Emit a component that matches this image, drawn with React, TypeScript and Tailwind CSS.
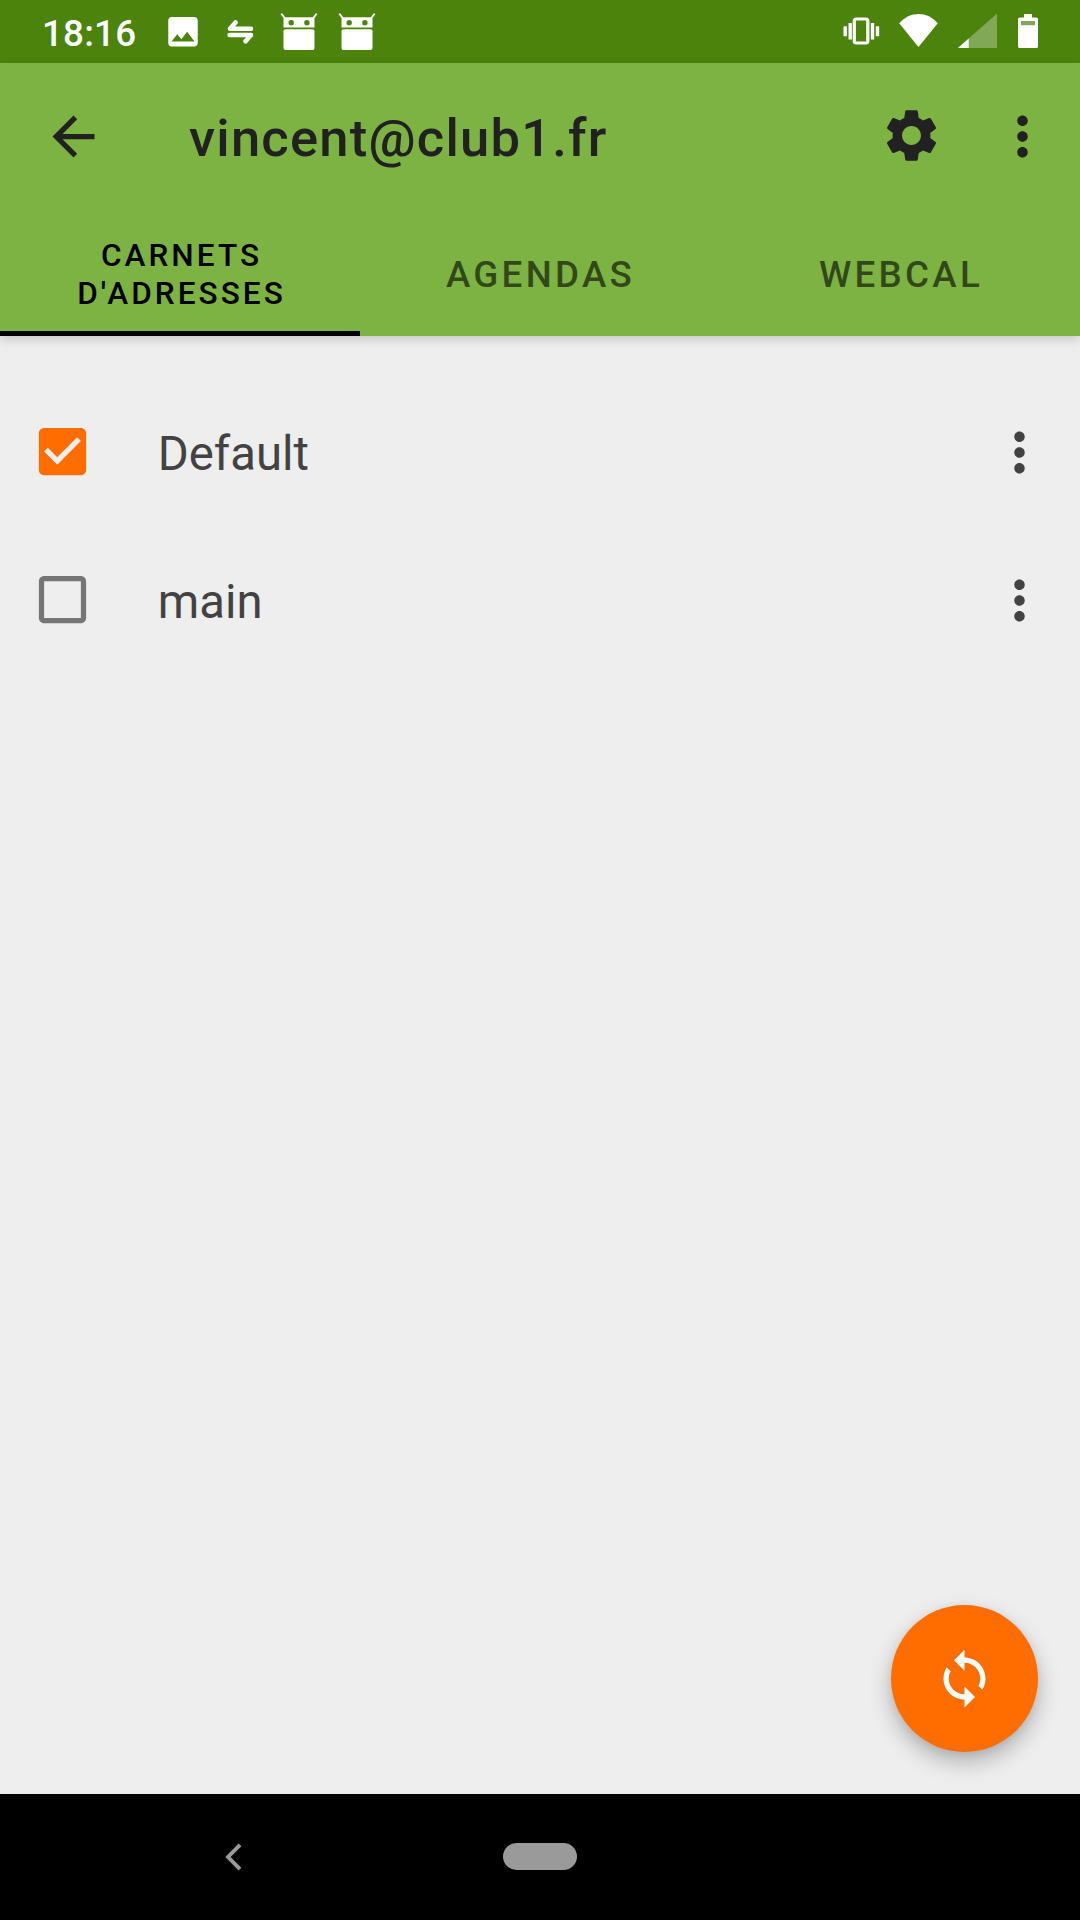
import React from "react";

const Icon = ({ d, className }: { d: string; className: string }) => (
  <svg viewBox="0 0 24 24" fill="currentColor" className={`size-[63px] shrink-0 ${className}`}>
    <path d={d} />
  </svg>
);

const BACK = "M20,11H7.83l5.59,-5.59L12,4l-8,8 8,8 1.41,-1.41L7.83,13H20v-2z";
const GEAR =
  "M19.14,12.94c0.04-0.3,0.06-0.61,0.06-0.94c0-0.32-0.02-0.64-0.07-0.94l2.03-1.58c0.18-0.14,0.23-0.41,0.12-0.61 l-1.92-3.32c-0.12-0.22-0.37-0.29-0.59-0.22l-2.39,0.96c-0.5-0.38-1.03-0.7-1.62-0.94L14.4,2.81c-0.04-0.24-0.24-0.41-0.48-0.41 h-3.84c-0.24,0-0.43,0.17-0.47,0.41L9.25,5.35C8.66,5.59,8.12,5.92,7.63,6.29L5.24,5.33c-0.22-0.08-0.47,0-0.59,0.22L2.74,8.87 C2.62,9.08,2.66,9.34,2.86,9.48l2.03,1.58C4.84,11.36,4.8,11.69,4.8,12s0.02,0.64,0.07,0.94l-2.03,1.58 c-0.18,0.14-0.23,0.41-0.12,0.61l1.92,3.32c0.12,0.22,0.37,0.29,0.59,0.22l2.39-0.96c0.5,0.38,1.03,0.7,1.62,0.94l0.36,2.54 c0.05,0.24,0.24,0.41,0.48,0.41h3.84c0.24,0,0.44-0.17,0.47-0.41l0.36-2.54c0.59-0.24,1.13-0.56,1.62-0.94l2.39,0.96 c0.22,0.08,0.47,0,0.59-0.22l1.92-3.32c0.12-0.22,0.07-0.47-0.12-0.61L19.14,12.94z M12,15.6c-1.98,0-3.6-1.62-3.6-3.6 s1.62-3.6,3.6-3.6s3.6,1.62,3.6,3.6S13.98,15.6,12,15.6z";
const MORE =
  "M12 8c1.1 0 2-.9 2-2s-.9-2-2-2-2 .9-2 2 .9 2 2 2zm0 2c-1.1 0-2 .9-2 2s.9 2 2 2 2-.9 2-2-.9-2-2-2zm0 6c-1.1 0-2 .9-2 2s.9 2 2 2 2-.9 2-2-.9-2-2-2z";
const CHECKED =
  "M19,3H5C3.9,3 3,3.9 3,5v14c0,1.1 0.9,2 2,2h14c1.1,0 2,-0.9 2,-2V5C21,3.9 20.1,3 19,3zM10,17l-5,-5 1.41,-1.41L10,14.17l7.59,-7.59L19,8l-9,9z";
const UNCHECKED =
  "M19 5v14H5V5h14m0-2H5c-1.1 0-2 .9-2 2v14c0 1.1.9 2 2 2h14c1.1 0 2-.9 2-2V5c0-1.1-.9-2-2-2z";
const SYNC =
  "M12 4V1L8 5l4 4V6c3.31 0 6 2.69 6 6 0 1.01-.25 1.97-.7 2.8l1.46 1.46C19.54 15.03 20 13.57 20 12c0-4.42-3.58-8-8-8zm0 14c-3.31 0-6-2.69-6-6 0-1.01.25-1.97.7-2.8L5.24 7.74C4.46 8.97 4 10.43 4 12c0 4.42 3.58 8 8 8v3l4-4-4-4v3z";
const IMAGE =
  "M21 19V5c0-1.1-.9-2-2-2H5c-1.1 0-2 .9-2 2v14c0 1.1.9 2 2 2h14c1.1 0 2-.9 2-2zM8.5 13.5l2.5 3.01L14.5 12l4.5 6H5l3.5-4.5z";

const Droid = ({ className }: { className: string }) => (
  <svg viewBox="0 0 38 38" fill="white" className={`h-[38px] w-[38px] shrink-0 ${className}`}>
    <path d="M1.800 1.200 5 5.500M36.200 1.200 33 5.500" stroke="white" strokeWidth="1.900" strokeLinecap="round" />
    <path
      fillRule="evenodd"
      d="M5.500 4.300h27a2 2 0 0 1 2 2v8.200h-31V6.300a2 2 0 0 1 2-2zM11.200 7.100a2.700 2.700 0 1 0 0 5.400 2.700 2.700 0 0 0 0-5.400zM26.900 7.100a2.700 2.700 0 1 0 0 5.400 2.700 2.700 0 0 0 0-5.400z"
    />
    <rect x="3.500" y="16.200" width="31" height="20.700" rx="2" />
  </svg>
);

function StatusBar() {
  return (
    <div className="flex h-[63px] shrink-0 items-start bg-[#4b830d] text-white">
      <span className="ml-[42px] mt-[12px] w-[96px] whitespace-nowrap text-[36.75px] font-medium leading-[43px] tracking-[0.2px]">
        18:16
      </span>
      <svg viewBox="3 3 18 18" fill="white" className="ml-[30px] mt-[17px] h-[29.5px] w-[30px]">
        <path d={IMAGE} />
      </svg>
      <svg viewBox="0 0 28 24" className="ml-[29px] mt-[20px] h-[24px] w-[28px]" fill="none" stroke="white" strokeWidth="4.600" strokeLinejoin="round" strokeLinecap="round">
        <path d="M24 8.800H3L8.500 2.500" />
        <path d="M2.600 15H24L18.500 21.300" />
      </svg>
      <Droid className="ml-[25px] mt-[13px]" />
      <Droid className="ml-[20px] mt-[13px]" />
      <svg viewBox="0 0 38 28" className="ml-[467px] mt-[17px] h-[28px] w-[38px]">
        <rect x="11.300" y="2" width="13.500" height="24" rx="2" fill="none" stroke="white" strokeWidth="3.200" />
        <path d="M7.200 6v16.500M29.500 6v16.500M2.200 9.200v10M34.500 9.200v10" stroke="white" strokeWidth="3.400" />
      </svg>
      <svg viewBox="0 0 40 34" fill="white" className="ml-[18px] mt-[14px] h-[34px] w-[40px]">
        <path d="M.2 9.300C5.500 3.200 12.500 0 19.500 0S33.500 3.200 38.800 9.300L19.500 33z" />
      </svg>
      <svg viewBox="0 0 39 35" fill="white" className="ml-[19px] mt-[13px] h-[35px] w-[39px]">
        <path d="M0 35 39 .4V35z" opacity=".3" />
        <path d="M0 35 10.700 25.500V35z" />
      </svg>
      <svg viewBox="0 0 20 34" className="ml-[21px] mt-[14px] h-[34px] w-[20px]">
        <path d="M6 0h8v3.500h4.500A1.500 1.500 0 0 1 20 5v27.500a1.500 1.500 0 0 1-1.500 1.500h-17A1.500 1.500 0 0 1 0 32.500V5a1.500 1.500 0 0 1 1.500-1.500H6z" fill="white" />
        <path d="M3 7h14v4.200H3z" fill="#81a856" />
      </svg>
    </div>
  );
}

function Row({ name, checked }: { name: string; checked: boolean }) {
  return (
    <div className="flex h-[148px] items-center pl-[31.4px] pr-[29px]">
      <Icon d={checked ? CHECKED : UNCHECKED} className={checked ? "mb-[0.6px] text-[#ff6d00]" : "mb-[0.6px] text-[#757575]"} />
      <span className="ml-[63.4px] mt-[3px] flex-1 text-[47.25px] leading-[56px] text-[#424242]">{name}</span>
      <Icon d={MORE} className="text-[#424242]" />
    </div>
  );
}

export default function App() {
  return (
    <div className="flex h-[1920px] w-[1080px] flex-col overflow-hidden bg-[#eeeeee] font-['Roboto',sans-serif]">
      <StatusBar />
      <header className="z-10 shrink-0 bg-[#7cb342] shadow-[0_4px_10px_rgba(0,0,0,0.15)]">
        <div className="flex h-[147px] items-center pl-[42px] pr-[26px] text-[#212121]">
          <Icon d={BACK} className="" />
          <h1 className="ml-[84px] mt-[3px] flex-1 whitespace-nowrap text-[52.5px] font-medium leading-[62px] tracking-[1.23px]">
            vincent@club1.fr
          </h1>
          <Icon d={GEAR} className="mb-[2px] mr-[48px]" />
          <Icon d={MORE} className="" />
        </div>
        <nav className="grid h-[126px] grid-cols-3 text-center font-medium">
          <div className="flex items-center justify-center border-b-[5px] border-black pl-[3px] pt-[9px] text-[31.5px] leading-[38px] tracking-[3.05px] text-black">
            <span>
              CARNETS
              <br />
              D'ADRESSES
            </span>
          </div>
          <div className="flex items-center justify-center pl-px pt-[3px] text-[36.75px] leading-[43px] tracking-[3.28px] text-black/60">
            AGENDAS
          </div>
          <div className="flex items-center justify-center pl-[2px] pt-[3px] text-[36.75px] leading-[43px] tracking-[3.28px] text-black/60">
            WEBCAL
          </div>
        </nav>
      </header>
      <main className="flex min-h-0 flex-1 flex-col pt-[42px]">
        <Row name="Default" checked />
        <Row name="main" checked={false} />
        <button className="mb-[42px] ml-auto mr-[42px] mt-auto flex size-[147px] items-center justify-center rounded-full bg-[#ff6d00] text-white shadow-[0_10px_22px_rgba(0,0,0,0.26),0_2px_8px_rgba(0,0,0,0.06)]">
          <Icon d={SYNC} className="" />
        </button>
      </main>
      <footer className="flex h-[126px] shrink-0 items-center bg-black pl-[225px]">
        <svg viewBox="0 0 17 28" className="h-[28px] w-[17px]" fill="none" stroke="#9a9a9a" strokeWidth="3.900">
          <path d="M15 1.800 3 14 15 26.200" />
        </svg>
        <div className="mb-px ml-[261px] h-[27px] w-[74px] rounded-full bg-[#9a9a9a]" />
      </footer>
    </div>
  );
}
